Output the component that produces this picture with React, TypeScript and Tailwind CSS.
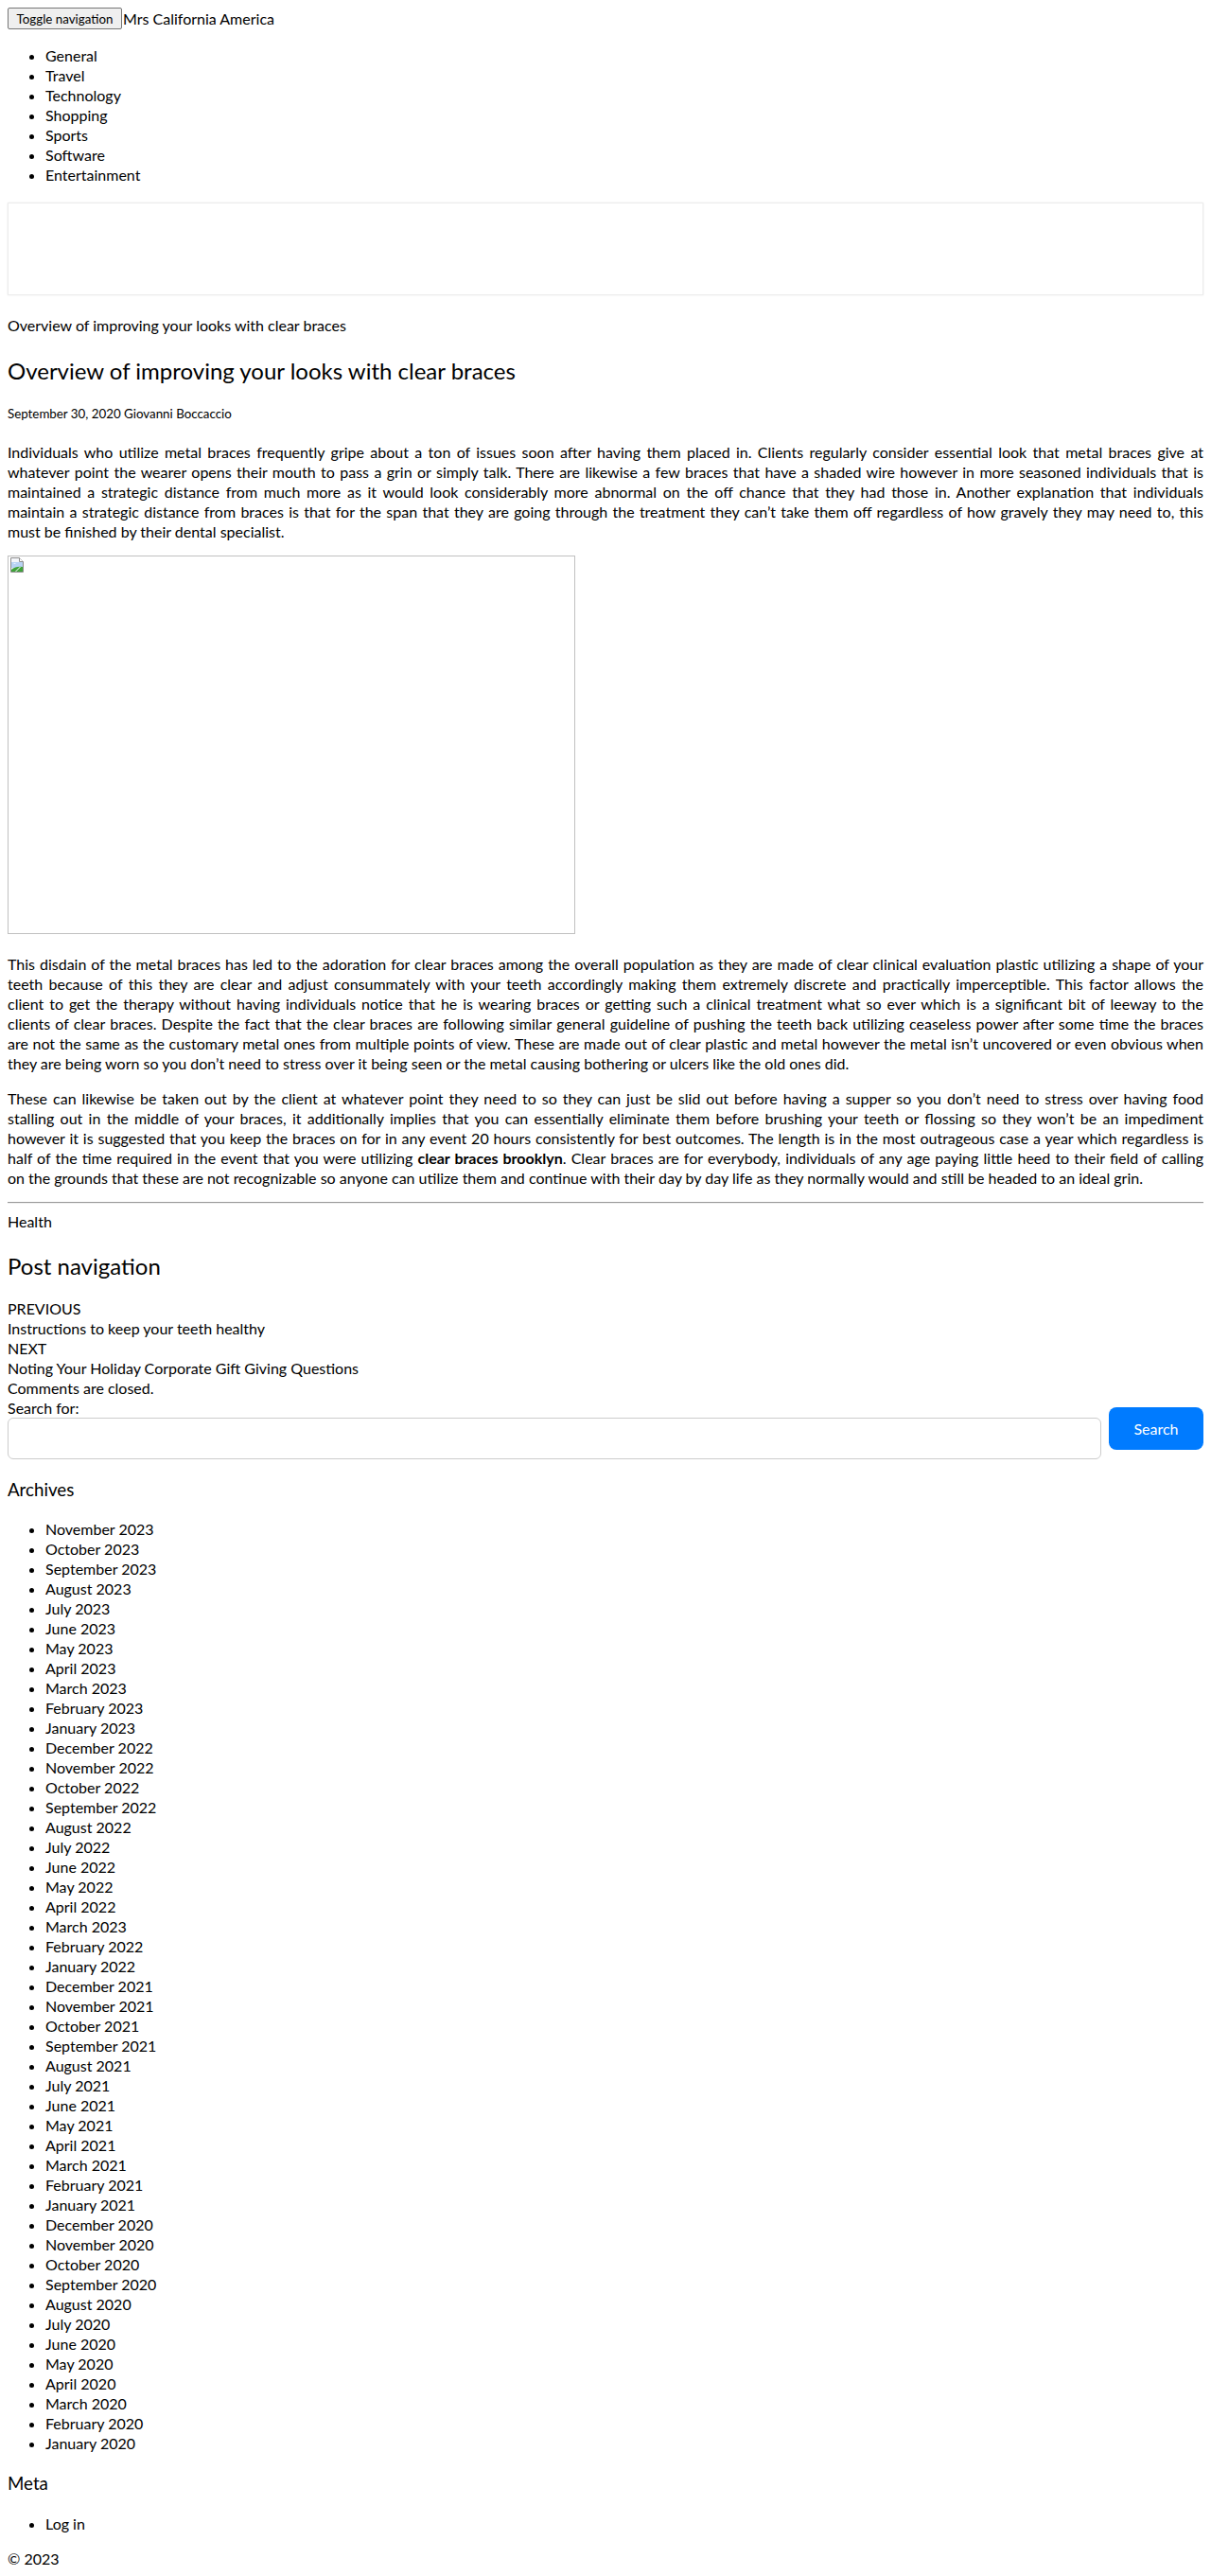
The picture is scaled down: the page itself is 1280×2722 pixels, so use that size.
import React from "react";

const navItems = ["General", "Travel", "Technology", "Shopping", "Sports", "Software", "Entertainment"];

const archives = [
  "November 2023", "October 2023", "September 2023", "August 2023", "July 2023", "June 2023", "May 2023", "April 2023", "March 2023", "February 2023", "January 2023",
  "December 2022", "November 2022", "October 2022", "September 2022", "August 2022", "July 2022", "June 2022", "May 2022", "April 2022", "March 2023", "February 2022", "January 2022",
  "December 2021", "November 2021", "October 2021", "September 2021", "August 2021", "July 2021", "June 2021", "May 2021", "April 2021", "March 2021", "February 2021", "January 2021",
  "December 2020", "November 2020", "October 2020", "September 2020", "August 2020", "July 2020", "June 2020", "May 2020", "April 2020", "March 2020", "February 2020", "January 2020",
];

const p1 = [
  "Individuals who utilize metal braces frequently gripe about a ton of issues soon after having them placed in. Clients regularly consider essential look that metal braces give at",
  "whatever point the wearer opens their mouth to pass a grin or simply talk. There are likewise a few braces that have a shaded wire however in more seasoned individuals that is",
  "maintained a strategic distance from much more as it would look considerably more abnormal on the off chance that they had those in. Another explanation that individuals",
  "maintain a strategic distance from braces is that for the span that they are going through the treatment they can’t take them off regardless of how gravely they may need to, this",
  "must be finished by their dental specialist.",
];

const p2 = [
  "This disdain of the metal braces has led to the adoration for clear braces among the overall population as they are made of clear clinical evaluation plastic utilizing a shape of your",
  "teeth because of this they are clear and adjust consummately with your teeth accordingly making them extremely discrete and practically imperceptible. This factor allows the",
  "client to get the therapy without having individuals notice that he is wearing braces or getting such a clinical treatment what so ever which is a significant bit of leeway to the",
  "clients of clear braces. Despite the fact that the clear braces are following similar general guideline of pushing the teeth back utilizing ceaseless power after some time the braces",
  "are not the same as the customary metal ones from multiple points of view. These are made out of clear plastic and metal however the metal isn’t uncovered or even obvious when",
  "they are being worn so you don’t need to stress over it being seen or the metal causing bothering or ulcers like the old ones did.",
];

function JLine({ children }: { children: React.ReactNode }) {
  return <span className="block text-justify [text-align-last:justify]">{children}</span>;
}

function LLine({ children }: { children: React.ReactNode }) {
  return <span className="block text-left">{children}</span>;
}

function Para({ lines, className }: { lines: string[]; className?: string }) {
  return (
    <p className={className}>
      {lines.map((l, i) =>
        i < lines.length - 1 ? <JLine key={i}>{l}</JLine> : <LLine key={i}>{l}</LLine>
      )}
    </p>
  );
}

function BrokenImageIcon() {
  return (
    <svg width="16" height="16" viewBox="0 0 16 16" className="block">
      <path d="M1.5 0.5 H10.5 L14.5 4.5 V15.5 H1.5 Z" fill="#f4f6fa" stroke="#8c8c8c" strokeWidth="1" />
      <path d="M10.5 0.5 V4.5 H14.5" fill="#ffffff" stroke="#8c8c8c" strokeWidth="1" />
      <rect x="2" y="5" width="12" height="6" fill="#b9d3f5" />
      <path d="M4 7 Q5.5 5.5 7 7 Z" fill="#ffffff" />
      <path d="M2 15 L2 13 Q7 9 14 10 L14 15 Z" fill="#3fa33a" />
      <path d="M6 15 L11 10 L12 10 L7 15 Z" fill="#ffffff" />
    </svg>
  );
}

export default function App() {
  return (
    <div className="bg-white p-[8px] text-black text-[16px] leading-[21px] font-['Lato','Noto_Sans',sans-serif]">
      <header className="flex h-[23px] items-center">
        <button className="h-[23px] w-[121px] rounded-[2px] border border-[#767676] bg-[#efefef] px-[6px] text-[13.33px] leading-[16px] text-black">
          Toggle navigation
        </button>
        <span className="ml-[1px]">Mrs California America</span>
      </header>

      <ul className="mt-[17px] list-disc pl-[40px]">
        {navItems.map((n) => (
          <li key={n}>{n}</li>
        ))}
      </ul>

      <div className="mt-[19px] h-[98px] w-full border border-[#ececec] shadow-[0_0_2px_rgba(0,0,0,0.08)]" />

      <div className="mt-[21px]">Overview of improving your looks with clear braces</div>

      <h1 className="mt-[22px] text-[24px] leading-[32px] font-normal">Overview of improving your looks with clear braces</h1>

      <div className="mt-[20px] text-[13.33px] leading-[18px]">September 30, 2020 Giovanni Boccaccio</div>

      <Para lines={p1} className="mt-[21px]" />

      <div className="mt-[15px] h-[400px] w-[600px] border border-[#c0c0c0] p-[1px]">
        <BrokenImageIcon />
      </div>

      <Para lines={p2} className="mt-[21px]" />

      <p className="mt-[16px]">
        <JLine>These can likewise be taken out by the client at whatever point they need to so they can just be slid out before having a supper so you don’t need to stress over having food</JLine>
        <JLine>stalling out in the middle of your braces, it additionally implies that you can essentially eliminate them before brushing your teeth or flossing so they won’t be an impediment</JLine>
        <JLine>however it is suggested that you keep the braces on for in any event 20 hours consistently for best outcomes. The length is in the most outrageous case a year which regardless is</JLine>
        <JLine>
          half of the time required in the event that you were utilizing <strong className="font-bold">clear braces brooklyn</strong>. Clear braces are for everybody, individuals of any age paying little heed to their field of calling
        </JLine>
        <LLine>on the grounds that these are not recognizable so anyone can utilize them and continue with their day by day life as they normally would and still be headed to an ideal grin.</LLine>
      </p>

      <hr className="mt-[15px] h-0 border-t border-b border-t-[#9a9a9a] border-b-[#eeeeee]" />

      <div className="mt-[8px]">Health</div>

      <h2 className="mt-[21px] text-[24px] leading-[32px] font-normal">Post navigation</h2>

      <div className="mt-[18px]">
        <div>PREVIOUS</div>
        <div>Instructions to keep your teeth healthy</div>
        <div>NEXT</div>
        <div>Noting Your Holiday Corporate Gift Giving Questions</div>
      </div>
      <div>Comments are closed.</div>

      <form className="flex items-center gap-[8px]" onSubmit={(e) => e.preventDefault()}>
        <label className="flex flex-1 flex-col">
          <span>Search for:</span>
          <input className="h-[44px] w-full rounded-[6px] border border-[#cccccc] bg-white px-[12px] outline-none" />
        </label>
        <button type="submit" className="h-[45px] w-[100px] rounded-[8px] bg-[#007bff] text-[16px] text-white">
          Search
        </button>
      </form>

      <h3 className="mt-[20px] text-[18.72px] leading-[25px] font-normal">Archives</h3>
      <ul className="mt-[18px] list-disc pl-[40px]">
        {archives.map((a, i) => (
          <li key={i}>{a}</li>
        ))}
      </ul>

      <h3 className="mt-[20px] text-[18.72px] leading-[25px] font-normal">Meta</h3>
      <ul className="mt-[19px] list-disc pl-[40px]">
        <li>Log in</li>
      </ul>

      <div className="mt-[16px]">© 2023</div>
    </div>
  );
}
